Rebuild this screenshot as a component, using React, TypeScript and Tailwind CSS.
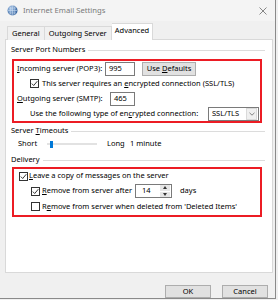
import React from "react";

function Check({ checked }: { checked: boolean }) {
  return (
    <span className="w-[9px] h-[9px] border border-[#333] bg-white flex items-center justify-center shrink-0">
      {checked && (
        <svg width="7" height="7" viewBox="0 0 7 7">
          <path d="M0.8 3.6 L2.7 5.5 L6.3 1.2" fill="none" stroke="#222" strokeWidth="0.9" />
        </svg>
      )}
    </span>
  );
}

function GroupHeader({ children }: { children: React.ReactNode }) {
  return (
    <div className="flex items-center h-[10px] pl-[5px] pr-[7px]">
      <span className="whitespace-nowrap">{children}</span>
      <span className="flex-1 h-px bg-[#dcdcdc] ml-[3px]" />
    </div>
  );
}

export default function App() {
  return (
    <div className="w-[278px] h-[300px] bg-[#f0f0f0] overflow-hidden flex font-['Noto_Sans',sans-serif] text-[7.5px] leading-none text-black">
      <div className="w-[276px] h-[299px] flex flex-col border-r border-b border-[#8a8a8a] bg-[#f0f0f0]">
        {/* title bar */}
        <div className="h-[21px] flex items-center pl-[7px] pr-[8px] bg-[#f4f4f4]">
          <svg width="11" height="11" viewBox="0 0 11 11">
            <defs>
              <radialGradient id="g" cx="0.35" cy="0.35" r="0.7">
                <stop offset="0" stopColor="#a9c8ec" />
                <stop offset="1" stopColor="#2d5d9a" />
              </radialGradient>
            </defs>
            <circle cx="5.5" cy="5.5" r="5" fill="url(#g)" />
            <path d="M1 5.5 H10 M5.5 0.5 V10.5 M2 3 H9 M2 8 H9" stroke="#d5e3f3" strokeWidth="0.5" fill="none" />
            <ellipse cx="5.5" cy="5.5" rx="2.3" ry="5" stroke="#d5e3f3" strokeWidth="0.5" fill="none" />
          </svg>
          <span className="ml-[5px] text-[#7a7a7a] text-[7.7px]">Internet Email Settings</span>
          <svg className="ml-auto" width="8" height="8" viewBox="0 0 8 8">
            <path d="M0.5 0.5 L7.5 7.5 M7.5 0.5 L0.5 7.5" stroke="#6a6a6a" strokeWidth="0.8" />
          </svg>
        </div>

        {/* tabs */}
        <div className="flex items-end h-[19px] pl-[7px] -mb-px relative z-10">
          <div className="h-[14px] px-[4px] flex items-center border border-b-0 border-[#d9d9d9] bg-[#f0f0f0]">General</div>
          <div className="h-[14px] px-[4px] flex items-center border border-l-0 border-b-0 border-[#d9d9d9] bg-[#f0f0f0]">Outgoing Server</div>
          <div className="h-[17px] px-[3px] pb-[2px] flex items-center border border-l-0 border-b-0 border-[#d9d9d9] bg-white">Advanced</div>
        </div>

        {/* panel */}
        <div className="ml-[5px] w-[268px] h-[234px] bg-white border border-[#d9d9d9] flex flex-col pt-[5px]">
          <GroupHeader>Server Port Numbers</GroupHeader>

          <div className="mt-[4px] ml-[6px] w-[250px] h-[64px] border-2 border-[#ec1c24] flex flex-col">
            <div className="h-[15px] flex items-center pl-[3px]">
              <span className="w-[88px]"><u>I</u>ncoming server (POP3):</span>
              <span className="w-[30px] h-[14px] border border-[#7a7a7a] flex items-center pl-[3px]">995</span>
              <span className="ml-[7px] w-[54px] h-[14px] bg-[#e1e1e1] border border-[#adadad] flex items-center justify-center">
                Use <u className="ml-[2px]">D</u>efaults
              </span>
            </div>
            <div className="h-[15px] flex items-center pl-[16px]">
              <Check checked />
              <span className="ml-[3px]">This server requires an <u>e</u>ncrypted connection (SSL/TLS)</span>
            </div>
            <div className="h-[15px] flex items-center pl-[3px]">
              <span className="w-[93px]"><u>O</u>utgoing server (SMTP):</span>
              <span className="w-[25px] h-[14px] border border-[#7a7a7a] flex items-center pl-[3px]">465</span>
            </div>
            <div className="h-[15px] flex items-center pl-[16px]">
              <span className="w-[178px]">Use the following type of en<u>c</u>rypted connection:</span>
              <span className="w-[51px] h-[14px] border border-[#7a7a7a] flex items-center">
                <span className="flex-1 pl-[3px]">SSL/TLS</span>
                <span className="w-[11px] h-[12px] mr-px bg-[#f0f0f0] border border-[#dadada] flex items-center justify-center">
                  <svg width="6" height="4" viewBox="0 0 6 4">
                    <path d="M0.5 0.8 L3 3.2 L5.5 0.8" fill="none" stroke="#666" strokeWidth="0.8" />
                  </svg>
                </span>
              </span>
            </div>
          </div>

          <div className="mt-[3px]">
            <GroupHeader>Server <u>T</u>imeouts</GroupHeader>
          </div>
          <div className="mt-[3px] h-[10px] flex items-center pl-[12px]">
            <span className="w-[29px]">Short</span>
            <span className="relative w-[50px] h-[10px] flex items-center">
              <span className="w-full h-[2px] bg-[#e2e2e2]" />
              <span className="absolute left-[3px] top-[1.5px] w-[3px] h-[7px] bg-[#0078d7]" />
            </span>
            <span className="ml-[10px] w-[23px]">Long</span>
            <span>1 minute</span>
          </div>

          <div className="mt-[6px]">
            <GroupHeader>Delivery</GroupHeader>
          </div>

          <div className="mt-[2px] ml-[6px] w-[250px] h-[50px] border-2 border-[#ec1c24] flex flex-col">
            <div className="h-[14px] flex items-center pl-[5px]">
              <Check checked />
              <span className="ml-[1px]"><u>L</u>eave a copy of messages on the server</span>
            </div>
            <div className="h-[16px] flex items-center pl-[17px]">
              <Check checked />
              <span className="ml-[2px] w-[93px]"><u>R</u>emove from server after</span>
              <span className="w-[37px] h-[14px] border border-[#7a7a7a] flex items-center">
                <span className="flex-1 pl-[6px]">14</span>
                <span className="w-[10px] h-[12px] mr-px flex flex-col gap-px">
                  <span className="flex-1 bg-[#e6e6e6] flex items-center justify-center">
                    <svg width="4" height="3" viewBox="0 0 4 3"><path d="M0 3 L2 0 L4 3 Z" fill="#333" /></svg>
                  </span>
                  <span className="flex-1 bg-[#e6e6e6] flex items-center justify-center">
                    <svg width="4" height="3" viewBox="0 0 4 3"><path d="M0 0 L2 3 L4 0 Z" fill="#333" /></svg>
                  </span>
                </span>
              </span>
              <span className="ml-[8px]">days</span>
            </div>
            <div className="h-[15px] flex items-center pl-[17px]">
              <Check checked={false} />
              <span className="ml-[2px]">R<u>e</u>move from server when deleted from 'Deleted Items'</span>
            </div>
          </div>
        </div>

        {/* buttons */}
        <div className="mt-[12px] flex pl-[165px] gap-[11px]">
          <span className="w-[46px] h-[13px] bg-[#e1e1e1] border border-[#adadad] flex items-center justify-center">OK</span>
          <span className="w-[46px] h-[13px] bg-[#e1e1e1] border border-[#adadad] flex items-center justify-center">Cancel</span>
        </div>
      </div>
    </div>
  );
}
